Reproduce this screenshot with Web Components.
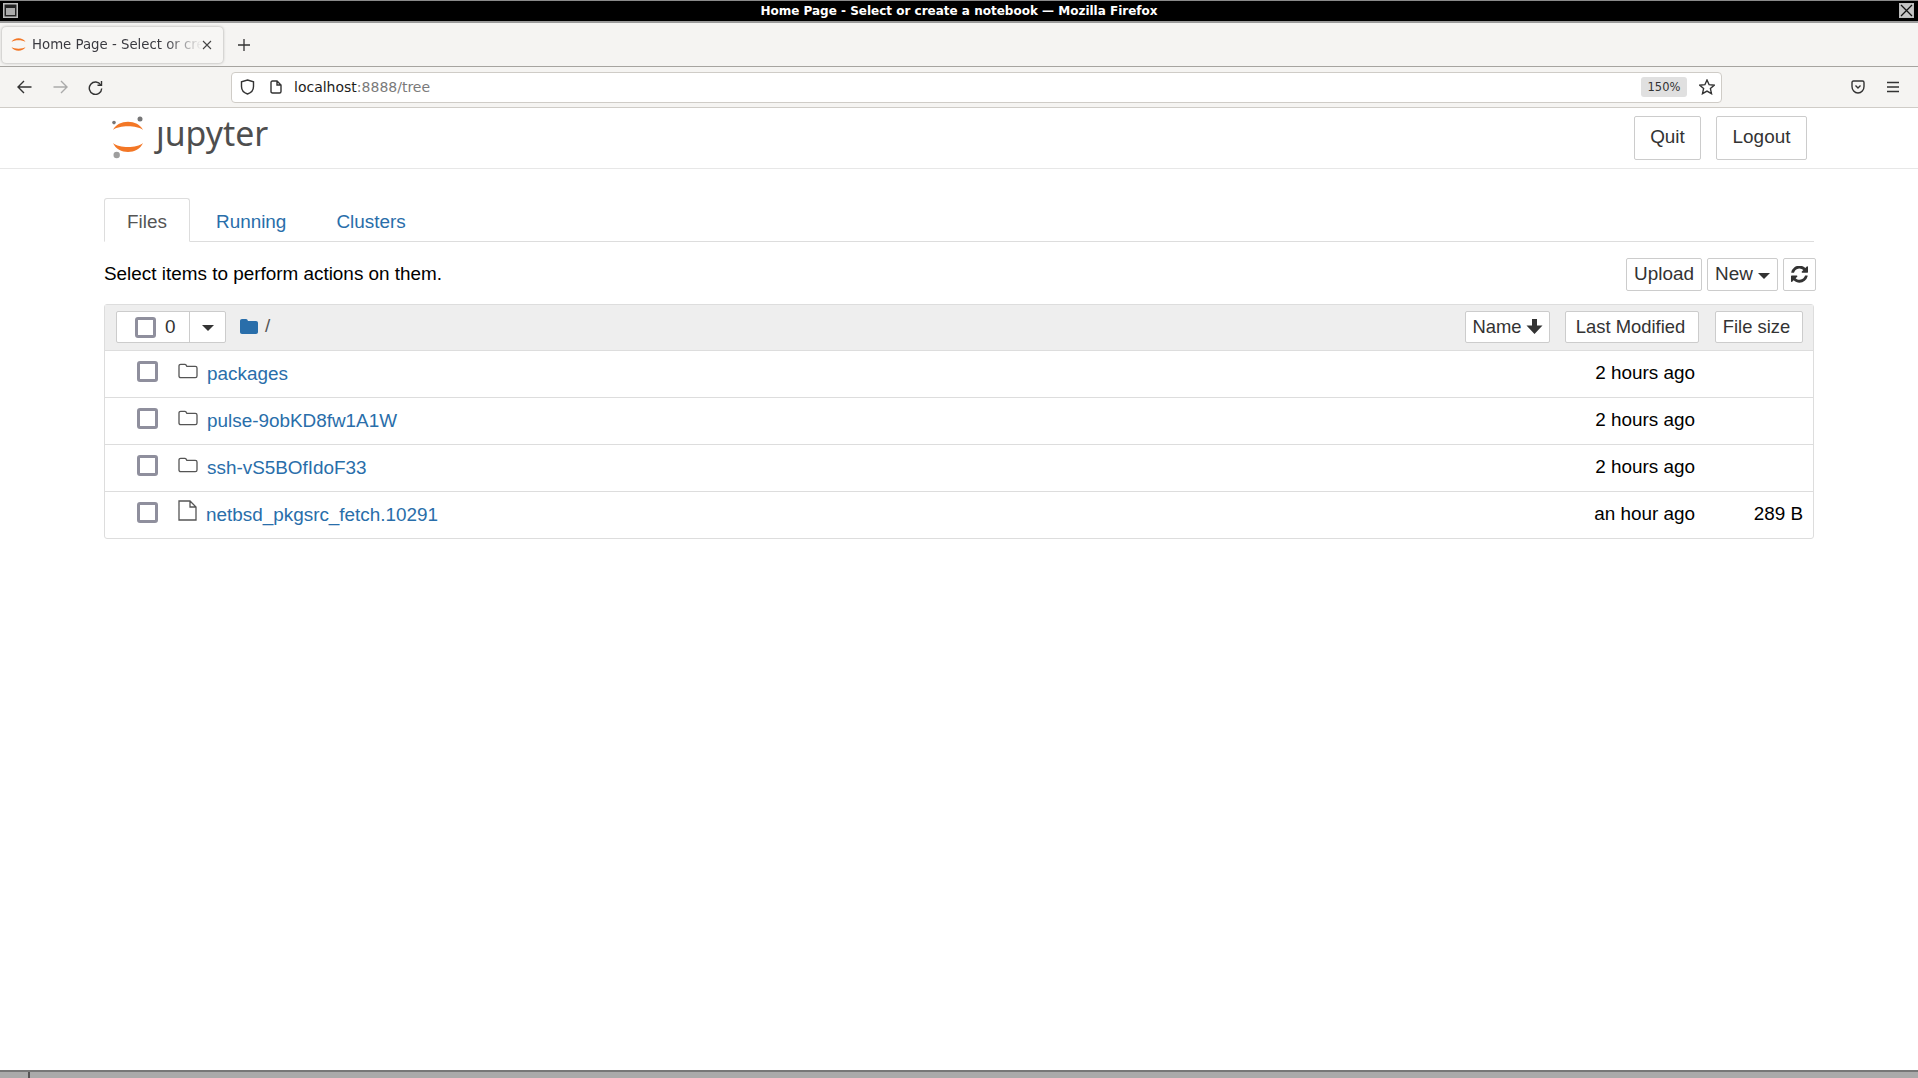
<!DOCTYPE html>
<html>
<head>
<meta charset="utf-8">
<title>Home Page - Select or create a notebook</title>
<style>
  html, body { margin: 0; height: 100%; background: #fff; overflow: hidden; }
  body { display: flex; flex-direction: column; font-family: "Liberation Sans", Arial, sans-serif; }
  jupyter-page { flex: 1; }
</style>
</head>
<body>
<window-titlebar>Home Page - Select or create a notebook — Mozilla Firefox</window-titlebar>
<browser-tabs>Home Page - Select or create a notebook</browser-tabs>
<browser-nav host="localhost" rest=":8888/tree" zoom="150%"></browser-nav>
<jupyter-header></jupyter-header>
<jupyter-page>
  <tree-tabs></tree-tabs>
  <tree-toolbar>Select items to perform actions on them.</tree-toolbar>
  <file-list>
    <file-row name="packages" modified="2 hours ago"></file-row>
    <file-row name="pulse-9obKD8fw1A1W" modified="2 hours ago"></file-row>
    <file-row name="ssh-vS5BOfIdoF33" modified="2 hours ago"></file-row>
    <file-row kind="file" name="netbsd_pkgsrc_fetch.10291" modified="an hour ago" size="289 B"></file-row>
  </file-list>
</jupyter-page>
<window-bottom></window-bottom>

<script>
class windowTitlebar extends HTMLElement {
  constructor() {
    super();
    this.attachShadow({ mode: "open" }).innerHTML = `
    <style>
      :host { display: flex; align-items: center; justify-content: center; position: relative; height: 20px;
        background: #000; border-top: 1px solid #8a8a8a; border-bottom: 2px solid #9a9a9a;
        color: #fff; font: bold 12px "DejaVu Sans", sans-serif; }
      .btn { position: absolute; top: 2px; width: 13px; height: 13px; background: #c4c4c4; border: 1px solid #bbb; }
      .l { left: 3px; } .r { right: 4px; }
      svg { display: block; }
    </style>
    <div class="btn l"><svg width="13" height="13"><rect x="0.5" y="0.5" width="12" height="12" fill="#222"/><rect x="2" y="4" width="9" height="7" fill="#aaa"/></svg></div>
    <slot></slot>
    <div class="btn r"><svg width="13" height="13"><path d="M1 1L12 12M12 1L1 12" stroke="#111" stroke-width="1.3"/></svg></div>`;
  }
}
customElements.define("window-titlebar", windowTitlebar);

class browserTabs extends HTMLElement {
  constructor() {
    super();
    this.attachShadow({ mode: "open" }).innerHTML = `
    <style>
      :host { display: flex; align-items: center; height: 43px; background: #f5f4f2; border-bottom: 1px solid #a6a4a0;
        padding-left: 2px; font: 13.3px "DejaVu Sans", sans-serif; color: #3a3a40; }
      .tab { display: flex; align-items: center; width: 221px; height: 36px; box-sizing: border-box; padding: 0 11px 0 9px;
        border-radius: 4px; background: #f7f6f4; box-shadow: 0 0 3px rgba(0,0,0,.35); }
      .title { flex: 1; margin-left: 6px; white-space: nowrap; overflow: hidden;
        -webkit-mask-image: linear-gradient(to right, #000 78%, transparent 100%); mask-image: linear-gradient(to right, #000 78%, transparent 100%); }
      svg { display: block; flex: none; }
      .plus { margin-left: 15px; }
    </style>
    <div class="tab">
      <svg width="15" height="15" viewBox="0 0 15 15"><path d="M.5 5C3 0 12 0 14.5 5C11.500 2.800 3.500 2.800 .5 5Z" fill="#f37726"/><path d="M.5 10C3 15 12 15 14.5 10C11.500 12.200 3.500 12.200 .5 10Z" fill="#f37726"/></svg>
      <span class="title"><slot></slot></span>
      <svg width="10" height="10" viewBox="0 0 10 10"><path d="M1 1L9 9M9 1L1 9" stroke="#444" stroke-width="1.1"/></svg>
    </div>
    <svg class="plus" width="12" height="12" viewBox="0 0 12 12"><path d="M6 0V12M0 6H12" stroke="#333" stroke-width="1.3"/></svg>`;
  }
}
customElements.define("browser-tabs", browserTabs);

class browserNav extends HTMLElement {
  constructor() {
    super();
    this.attachShadow({ mode: "open" });
  }

  connectedCallback() {
    this.shadowRoot.innerHTML = `
    <style>
      :host { display: flex; align-items: center; height: 40px; background: #f5f4f2; border-bottom: 1px solid #cfccc7;
        font: 14px "DejaVu Sans", sans-serif; color: #1d1d20; }
      svg { display: block; flex: none; fill: none; stroke: #333; stroke-width: 1.4; }
      .back { margin-left: 17px; }
      .fwd { margin-left: 21px; stroke: #aaa; }
      .reload { margin-left: 20px; }
      .url { display: flex; align-items: center; width: 1491px; height: 31px; box-sizing: border-box; margin-left: 128px;
        background: #fff; border: 1px solid #cfccc7; border-radius: 4px; padding-left: 8px; }
      .page { margin-left: 15px; }
      .text { margin-left: 12px; flex: 1; }
      .rest { color: #7a7a7a; }
      .zoom { width: 46px; height: 20px; line-height: 20px; text-align: center; background: #e0e0e0; border-radius: 3px; font-size: 11.5px; color: #333; }
      .star { margin: 0 6px 0 12px; }
      .pocket { margin-left: 129px; }
      .menu { margin-left: 21px; }
    </style>
    <svg class="back" width="15" height="14" viewBox="0 0 15 14"><path d="M14.5 7H1M7 1L1 7L7 13"/></svg>
    <svg class="fwd" width="15" height="14" viewBox="0 0 15 14"><path d="M.5 7H14M8 1L14 7L8 13"/></svg>
    <svg class="reload" width="15" height="15" viewBox="0 0 15 15"><path d="M12.8 5A6.200 6.200 0 1 0 13.700 8.500"/><path d="M13.5 1V5.300H9.500"/></svg>
    <div class="url">
      <svg width="15" height="16" viewBox="0 0 15 16"><path d="M7.5 1L13.500 2.800V7.500C13.500 11.500 10.500 14 7.500 15C4.500 14 1.500 11.500 1.500 7.500V2.800Z"/></svg>
      <svg class="page" width="12" height="14" viewBox="0 0 12 14"><path d="M1 2.500C1 1.500 1.500 1 2.500 1H7L11 5V11.500C11 12.500 10.500 13 9.500 13H2.500C1.500 13 1 12.500 1 11.500ZM7 1V5H11"/></svg>
      <span class="text">${this.getAttribute("host")}<span class="rest">${this.getAttribute("rest")}</span></span>
      <span class="zoom">${this.getAttribute("zoom")}</span>
      <svg class="star" width="16" height="16" viewBox="0 0 16 16"><path d="M8 1L10.100 5.700L15.200 6.200L11.400 9.600L12.500 14.700L8 12.100L3.500 14.700L4.600 9.600L.8 6.200L5.900 5.700Z"/></svg>
    </div>
    <svg class="pocket" width="14" height="14" viewBox="0 0 14 14"><path d="M1 2.500C1 1.500 1.500 1 2.500 1H11.500C12.500 1 13 1.500 13 2.500V6.500C13 10 10.500 13 7 13C3.500 13 1 10 1 6.500ZM4.500 5.500L7 8L9.500 5.500"/></svg>
    <svg class="menu" width="14" height="12" viewBox="0 0 14 12"><path d="M1 1.500H13M1 6H13M1 10.500H13"/></svg>`;
  }
}
customElements.define("browser-nav", browserNav);

class jupyterHeader extends HTMLElement {
  constructor() {
    super();
    this.attachShadow({ mode: "open" }).innerHTML = `
    <style>
      :host { display: flex; align-items: flex-start; height: 60px; border-bottom: 1px solid #e7e7e7;
        font: 18.9px "Liberation Sans", Arial, sans-serif; }
      .logo { display: flex; margin: 10px 0 0 110px; }
      .mark { display: block; overflow: visible; }
      .word { position: relative; font: 33.8px "Noto Sans", "Open Sans", sans-serif; color: #4e4e4e; line-height: 40px; margin: -5px 0 0 9px; }
      .nodot { position: absolute; left: 0; top: 5px; width: 9px; height: 9px; background: #fff; }
      .btns { display: flex; gap: 15px; margin: 8px 111px 0 auto; }
      .btn { display: flex; align-items: center; justify-content: center; height: 44px; box-sizing: border-box; padding-bottom: 2px; border: 1px solid #ccc; border-radius: 2px; color: #333; }
      .quit { width: 67px; } .logout { width: 91px; }
    </style>
    <div class="logo">
      <svg class="mark" width="37" height="42" viewBox="0 0 37 42">
        <circle cx="30" cy="1" r="2.5" fill="#767677"/>
        <circle cx="4" cy="4.600" r="1.800" fill="#767677"/>
        <circle cx="6.700" cy="37" r="3.200" fill="#9e9e9e"/>
        <path d="M3 12C8 1 28 1 33 12C27 7 9 7 3 12Z" fill="#f37726"/>
        <path d="M3 25C8 37 28 37 33 25C27 30.300 9 30.300 3 25Z" fill="#f37726"/>
      </svg>
      <span class="word">jupyter<span class="nodot"></span></span>
    </div>
    <div class="btns"><div class="btn quit">Quit</div><div class="btn logout">Logout</div></div>`;
  }
}
customElements.define("jupyter-header", jupyterHeader);

class jupyterPage extends HTMLElement {
  constructor() {
    super();
    this.attachShadow({ mode: "open" }).innerHTML = `
    <style>
      :host { display: block; padding: 29px 104px 0; font: 18.9px "Liberation Sans", Arial, sans-serif; color: #000; }
    </style>
    <slot></slot>`;
  }
}
customElements.define("jupyter-page", jupyterPage);

class treeTabs extends HTMLElement {
  constructor() {
    super();
    this.attachShadow({ mode: "open" }).innerHTML = `
    <style>
      :host { display: flex; height: 44px; border-bottom: 1px solid #ddd; box-sizing: border-box; }
      .tab { display: flex; align-items: center; height: 44px; box-sizing: border-box; padding-top: 4px; color: #296eaa; }
      .on { width: 86px; justify-content: center; color: #555; background: #fff; border: 1px solid #ddd; border-bottom-color: #fff; border-radius: 3px 3px 0 0; }
      .run { margin-left: 26px; }
      .clu { margin-left: 50px; }
    </style>
    <div class="tab on">Files</div>
    <div class="tab run">Running</div>
    <div class="tab clu">Clusters</div>`;
  }
}
customElements.define("tree-tabs", treeTabs);

class treeToolbar extends HTMLElement {
  constructor() {
    super();
    this.attachShadow({ mode: "open" }).innerHTML = `
    <style>
      :host { display: flex; align-items: center; height: 33px; margin: 16px -2px 13px 0; }
      .label { padding-bottom: 1px; }
      .btns { display: flex; gap: 5px; margin-left: auto; }
      .btn { display: flex; align-items: center; justify-content: center; gap: 5px; height: 33px; box-sizing: border-box; padding-bottom: 2px; border: 1px solid #ccc; border-radius: 2px; color: #333; }
      .up { width: 76px; } .new { width: 71px; } .ref { width: 33px; padding: 0; }
      .caret { width: 0; height: 0; margin-top: 4px; border: 6px solid transparent; border-top-color: #333; border-bottom: 0; }
      svg { display: block; }
    </style>
    <span class="label"><slot></slot></span>
    <div class="btns">
      <div class="btn up">Upload</div>
      <div class="btn new">New<span class="caret"></span></div>
      <div class="btn ref"><svg width="17" height="17" viewBox="0 0 1536 1536" fill="#333"><path d="M1511 896q0 5-1 7-64 268-268 434.500T764 1504q-146 0-282.500-55T238 1292l-129 129q-19 19-45 19t-45-19-19-45V928q0-26 19-45t45-19h448q26 0 45 19t19 45-19 45L420 1110q71 66 161 102t187 36q134 0 250-65t186-179q11-17 53-117 8-23 30-23h192q13 0 22.500 9.500t9.500 22.500zm25-800v448q0 26-19 45t-45 19h-448q-26 0-45-19t-19-45 19-45l138-138q-148-137-349-137-134 0-250 65T332 468q-11 17-53 117-8 23-30 23H50q-13 0-22.500-9.500T18 576v-7q65-268 270-434.500T768 -32q146 0 284 55.500T1297 180l130-129q19-19 45-19t45 19 19 45z"/></svg></div>
    </div>`;
  }
}
customElements.define("tree-toolbar", treeToolbar);

class fileList extends HTMLElement {
  constructor() {
    super();
    this.attachShadow({ mode: "open" }).innerHTML = `
    <style>
      :host { display: block; border: 1px solid #ddd; border-radius: 3px; color: #000; }
      .head { display: flex; align-items: center; height: 46px; box-sizing: border-box; padding: 0 10px 1px 11px; background: #eee; border-bottom: 1px solid #ddd; color: #333; }
      .group { display: flex; width: 110px; height: 32px; box-sizing: border-box; background: #fff; border: 1px solid #ccc; border-radius: 2px; }
      .sel { display: flex; align-items: center; width: 73px; box-sizing: border-box; padding: 0 0 0 18px; border-right: 1px solid #ccc; }
      .box { width: 21px; height: 21px; box-sizing: border-box; border: 3px solid #8f8f9d; border-radius: 3px; margin-right: 9px; }
      .num { margin-top: -1px; }
      .drop { flex: 1; display: flex; align-items: center; justify-content: center; padding-top: 2px; }
      .caret { width: 0; height: 0; border: 6.5px solid transparent; border-top-color: #333; border-bottom: 0; }
      .folder { display: block; margin: -2px 0 0 14px; }
      .root { margin: -2px 0 0 7px; color: #555; }
      .sort { display: flex; align-items: center; justify-content: center; gap: 4px; height: 32px; box-sizing: border-box; padding-bottom: 1px; font-size: 18.4px; background: #fff; border: 1px solid #ccc; border-radius: 2px; }
      .name { width: 85px; margin-left: auto; }
      .mod { width: 134px; margin-left: 15px; padding-right: 3px; }
      .size { width: 88px; margin-left: 16px; padding-right: 5px; }
      svg { display: block; }
    </style>
    <div class="head">
      <div class="group">
        <div class="sel"><span class="box"></span><span class="num">0</span></div>
        <div class="drop"><span class="caret"></span></div>
      </div>
      <svg class="folder" width="18" height="17" viewBox="0 0 18 17"><path d="M0 3C0 1.800.8 1 2 1H6C7.200 1 7.500 1.800 8 3H16C17.200 3 18 3.800 18 5V14C18 15.200 17.200 16 16 16H2C.8 16 0 15.200 0 14Z" fill="#296eaa"/></svg>
      <span class="root">/</span>
      <div class="sort name">Name<svg width="17" height="17" viewBox="0 0 17 17"><path d="M6 1H11V7.500H16.500L8.500 16L.5 7.500H6Z" fill="#333"/></svg></div>
      <div class="sort mod">Last Modified</div>
      <div class="sort size">File size</div>
    </div>
    <slot></slot>`;
  }
}
customElements.define("file-list", fileList);

class fileRow extends HTMLElement {
  constructor() {
    super();
    this.attachShadow({ mode: "open" });
  }

  get name() {
    return this.getAttribute("name");
  }

  connectedCallback() {
    const isFile = this.getAttribute("kind") === "file";
    const icon = isFile
      ? `<svg width="19" height="21" viewBox="0 0 19 21"><path d="M1 1H12L18 7V20H1ZM12 1V7H18" fill="none" stroke="#555" stroke-width="1.3"/></svg>`
      : `<svg width="20" height="16" viewBox="0 0 20 16"><path d="M1 3C1 2 1.700 1.300 2.700 1.300H7C8 1.300 8.300 2 8.800 3.300H17.300C18.300 3.300 19 4 19 5V13C19 14 18.300 14.700 17.300 14.700H2.700C1.700 14.700 1 14 1 13Z" fill="none" stroke="#555" stroke-width="1.3"/></svg>`;
    this.shadowRoot.innerHTML = `
    <style>
      :host { display: flex; align-items: center; height: 47px; box-sizing: border-box; border-bottom: 1px solid #ddd; padding: 0 10px 0 32px; }
      :host(:last-child) { border-bottom: 0; height: 46px; }
      .box { width: 21px; height: 21px; box-sizing: border-box; border: 3px solid #8f8f9d; border-radius: 3px; flex: none; margin-top: -5px; }
      .icon { width: 20px; margin-left: 20px; margin-top: ${isFile ? -10 : -6}px; flex: none; }
      svg { display: block; }
      a { margin-left: ${isFile ? 8 : 9}px; color: #296eaa; text-decoration: none; flex: 1; }
      .mod { width: 200px; text-align: right; padding-bottom: 2px; }
      .size { width: 108px; text-align: right; padding-bottom: 2px; }
    </style>
    <span class="box"></span>
    <span class="icon">${icon}</span>
    <a href="#">${this.name}</a>
    <span class="mod">${this.getAttribute("modified")}</span>
    <span class="size">${this.getAttribute("size") || ""}</span>`;
  }
}
customElements.define("file-row", fileRow);

class windowBottom extends HTMLElement {
  constructor() {
    super();
    this.attachShadow({ mode: "open" }).innerHTML = `
    <style>
      :host { display: flex; height: 6px; background: #aaa; border-top: 2px solid #777; }
      .a { width: 28px; border-right: 2px solid #555; }
    </style>
    <div class="a"></div>`;
  }
}
customElements.define("window-bottom", windowBottom);
</script>
</body>
</html>
